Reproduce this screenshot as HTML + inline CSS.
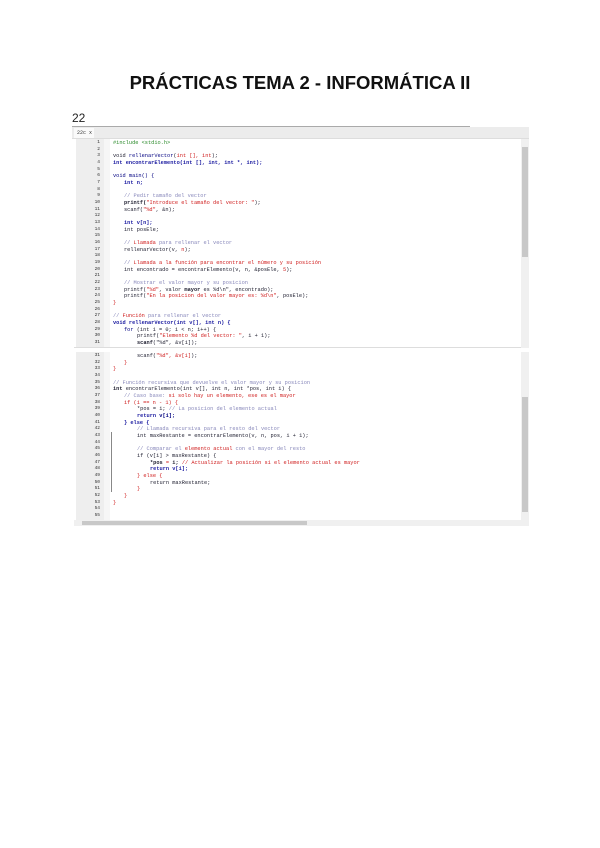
<!DOCTYPE html>
<html><head><meta charset="utf-8"><style>
body{margin:0;width:600px;height:848px;background:#fff;position:relative;overflow:hidden;font-family:"Liberation Sans",sans-serif}
.t{position:absolute;left:0;width:600px;top:72px;text-align:center;font-weight:bold;font-size:18.5px;color:#111}
.n22{position:absolute;left:72px;top:111px;font-size:12px;color:#222}
.pane{position:absolute;left:74px;width:455px;background:#fff}
.gut{position:absolute;left:2px;top:0;bottom:0;width:28px;background:#eeeeee}
.fold{position:absolute;left:30px;top:0;bottom:0;width:6px;background:#f6f6f6}
.vs{position:absolute;right:0;top:0;bottom:0;width:8px;background:#f0f0f0}
.th{position:absolute;right:1px;width:6px;background:#c8c8c8}
.l{position:absolute;font-family:"Liberation Mono",monospace;font-size:5.3px;line-height:6px;white-space:pre;color:#223}
.ln{position:absolute;left:14px;width:12px;text-align:right;font-family:"Liberation Mono",monospace;font-size:4.5px;line-height:6px;color:#333}
.g{color:#2a8a2a}.b{color:#1a1aa0;font-weight:bold}.r{color:#d02020}.c{color:#8888bb}.k{color:#000080}
</style></head><body>
<div class="t">PRÁCTICAS TEMA 2 - INFORMÁTICA II</div>
<div class="n22">22</div>
<div style="position:absolute;left:72px;top:126px;width:398px;height:1px;background:#aaa"></div>
<div style="position:absolute;left:72px;top:127px;width:457px;height:11px;background:#ececec;border-bottom:1px solid #ddd"></div>
<div style="position:absolute;left:74px;top:128px;width:20px;height:10px;background:#fafafa;font-size:5px;color:#333;font-family:'Liberation Mono',monospace;line-height:10px">&nbsp;22c x</div>

<div class="pane" style="top:139px;height:209px">
<div class="gut"></div><div class="fold"></div>
<div class="vs"><div class="th" style="top:8px;height:110px"></div></div>
<div style="position:absolute;right:8px;bottom:0;left:0;height:1px;background:#ddd"></div>
</div>
<div class="pane" style="top:352px;height:174px;left:74px">
<div class="gut"></div><div class="fold"></div>
<div class="vs" style="bottom:6px"><div class="th" style="top:45px;height:115px"></div></div>
<div style="position:absolute;left:0;right:0;bottom:0;height:6px;background:#f0f0f0"><div style="position:absolute;left:8px;top:1px;width:225px;height:4px;background:#c8c8c8"></div></div>
</div>

<!-- top pane lines -->
<div style="position:absolute;left:74px;top:140px">
<div class="ln" style="top:0">1</div><div class="l g" style="left:39px;top:0">#include &lt;stdio.h&gt;</div>
<div class="ln" style="top:6.7px">2</div>
<div class="ln" style="top:13.3px">3</div><div class="l" style="left:39px;top:13.3px">void <span class="k">rellenarVector</span>(<span class="r">int [], int</span>);</div>
<div class="ln" style="top:20px">4</div><div class="l b" style="left:39px;top:20px">int encontrarElemento(int [], int, int *, int);</div>
<div class="ln" style="top:26.7px">5</div>
<div class="ln" style="top:33.3px">6</div><div class="l" style="left:39px;top:33.3px"><span class="k">void main() {</span></div>
<div class="ln" style="top:40px">7</div><div class="l b" style="left:50px;top:40px">int n;</div>
<div class="ln" style="top:46.7px">8</div>
<div class="ln" style="top:53.3px">9</div><div class="l c" style="left:50px;top:53.3px">// Pedir tamaño del vector</div>
<div class="ln" style="top:60px">10</div><div class="l" style="left:50px;top:60px"><b>printf(</b><span class="r">"Introduce el tamaño del vector: "</span>);</div>
<div class="ln" style="top:66.7px">11</div><div class="l" style="left:50px;top:66.7px">scanf(<span class="r">"%d"</span>, &amp;n);</div>
<div class="ln" style="top:73.3px">12</div>
<div class="ln" style="top:80px">13</div><div class="l b" style="left:50px;top:80px">int v[n];</div>
<div class="ln" style="top:86.7px">14</div><div class="l" style="left:50px;top:86.7px">int posEle;</div>
<div class="ln" style="top:93.3px">15</div>
<div class="ln" style="top:100px">16</div><div class="l c" style="left:50px;top:100px">// <span class="r">Llamada</span> para rellenar el vector</div>
<div class="ln" style="top:106.7px">17</div><div class="l" style="left:50px;top:106.7px">rellenarVector(v, <span class="r">n</span>);</div>
<div class="ln" style="top:113.3px">18</div>
<div class="ln" style="top:120px">19</div><div class="l c" style="left:50px;top:120px">// <span class="r">Llamada a la función para encontrar el número y su posición</span></div>
<div class="ln" style="top:126.7px">20</div><div class="l" style="left:50px;top:126.7px">int encontrado = encontrarElemento(v, n, &amp;posEle, <span class="r">5</span>);</div>
<div class="ln" style="top:133.3px">21</div>
<div class="ln" style="top:140px">22</div><div class="l c" style="left:50px;top:140px">// Mostrar el valor mayor y su posicion</div>
<div class="ln" style="top:146.7px">23</div><div class="l" style="left:50px;top:146.7px">printf(<span class="r">"%d"</span>, valor <b>mayor</b> es %d\n", encontrado);</div>
<div class="ln" style="top:153.3px">24</div><div class="l" style="left:50px;top:153.3px">printf(<span class="r">"En la posicion del valor mayor es: %d\n"</span>, posEle);</div>
<div class="ln" style="top:160px">25</div><div class="l r" style="left:39px;top:160px">}</div>
<div class="ln" style="top:166.7px">26</div>
<div class="ln" style="top:173.3px">27</div><div class="l c" style="left:39px;top:173.3px">// <span class="r">Función</span> para rellenar el vector</div>
<div class="ln" style="top:180px">28</div><div class="l b" style="left:39px;top:180px">void rellenarVector(int v[], int n) {</div>
<div class="ln" style="top:186.7px">29</div><div class="l" style="left:50px;top:186.7px"><span class="k">for</span> (int i = 0; i &lt; n; i++) {</div>
<div class="ln" style="top:193.3px">30</div><div class="l" style="left:63px;top:193.3px">printf(<span class="r">"Elemento %d del vector: "</span>, i + 1);</div>
<div class="ln" style="top:200px">31</div><div class="l" style="left:63px;top:200px"><b>scanf</b>("%d", &amp;v[i]);</div>
</div>

<!-- bottom pane lines -->
<div style="position:absolute;left:74px;top:353px">
<div class="ln" style="top:0">31</div><div class="l" style="left:63px;top:0">scanf(<span class="r">"%d", &amp;v[i]</span>);</div>
<div class="ln" style="top:6.7px">32</div><div class="l r" style="left:50px;top:6.7px">}</div>
<div class="ln" style="top:13.3px">33</div><div class="l r" style="left:39px;top:13.3px">}</div>
<div class="ln" style="top:20px">34</div>
<div class="ln" style="top:26.7px">35</div><div class="l c" style="left:39px;top:26.7px">// Función recursiva que devuelve el valor mayor y su posicion</div>
<div class="ln" style="top:33.3px">36</div><div class="l" style="left:39px;top:33.3px"><b>int</b> encontrarElemento(int v[], int n, int *pos, int i) {</div>
<div class="ln" style="top:40px">37</div><div class="l c" style="left:50px;top:40px">// Caso base: <span class="r">si solo hay un elemento, ese es el mayor</span></div>
<div class="ln" style="top:46.7px">38</div><div class="l" style="left:50px;top:46.7px"><span class="r">if (i == n - 1) {</span></div>
<div class="ln" style="top:53.3px">39</div><div class="l" style="left:63px;top:53.3px">*pos = i; <span class="c">// La posicion del elemento actual</span></div>
<div class="ln" style="top:60px">40</div><div class="l b" style="left:63px;top:60px">return <span class="k">v[i];</span></div>
<div class="ln" style="top:66.7px">41</div><div class="l b" style="left:50px;top:66.7px">} else {</div>
<div class="ln" style="top:73.3px">42</div><div class="l c" style="left:63px;top:73.3px">// Llamada recursiva para el resto del vector</div>
<div class="ln" style="top:80px">43</div><div class="l" style="left:63px;top:80px">int maxRestante = encontrarElemento(v, n, pos, i + 1);</div>
<div class="ln" style="top:86.7px">44</div>
<div class="ln" style="top:93.3px">45</div><div class="l c" style="left:63px;top:93.3px">// Comparar el <span class="r">elemento actual</span> con el mayor del resto</div>
<div class="ln" style="top:100px">46</div><div class="l" style="left:63px;top:100px">if (v[i] &gt; maxRestante) {</div>
<div class="ln" style="top:106.7px">47</div><div class="l" style="left:76px;top:106.7px"><b>*pos</b> <span class="r">=</span> <b>i;</b> <span class="r">// Actualizar la posición si el elemento actual es mayor</span></div>
<div class="ln" style="top:113.3px">48</div><div class="l b" style="left:76px;top:113.3px">return v[i];</div>
<div class="ln" style="top:120px">49</div><div class="l" style="left:63px;top:120px"><span class="r">} else {</span></div>
<div class="ln" style="top:126.7px">50</div><div class="l" style="left:76px;top:126.7px">return maxRestante;</div>
<div class="ln" style="top:133.3px">51</div><div class="l r" style="left:63px;top:133.3px">}</div>
<div class="ln" style="top:140px">52</div><div class="l r" style="left:50px;top:140px">}</div>
<div class="ln" style="top:146.7px">53</div><div class="l r" style="left:39px;top:146.7px">}</div>
<div class="ln" style="top:153.3px">54</div>
<div class="ln" style="top:160px">55</div>
</div>
<div style="position:absolute;left:111px;top:432px;width:1px;height:60px;background:#888"></div>
</body></html>
